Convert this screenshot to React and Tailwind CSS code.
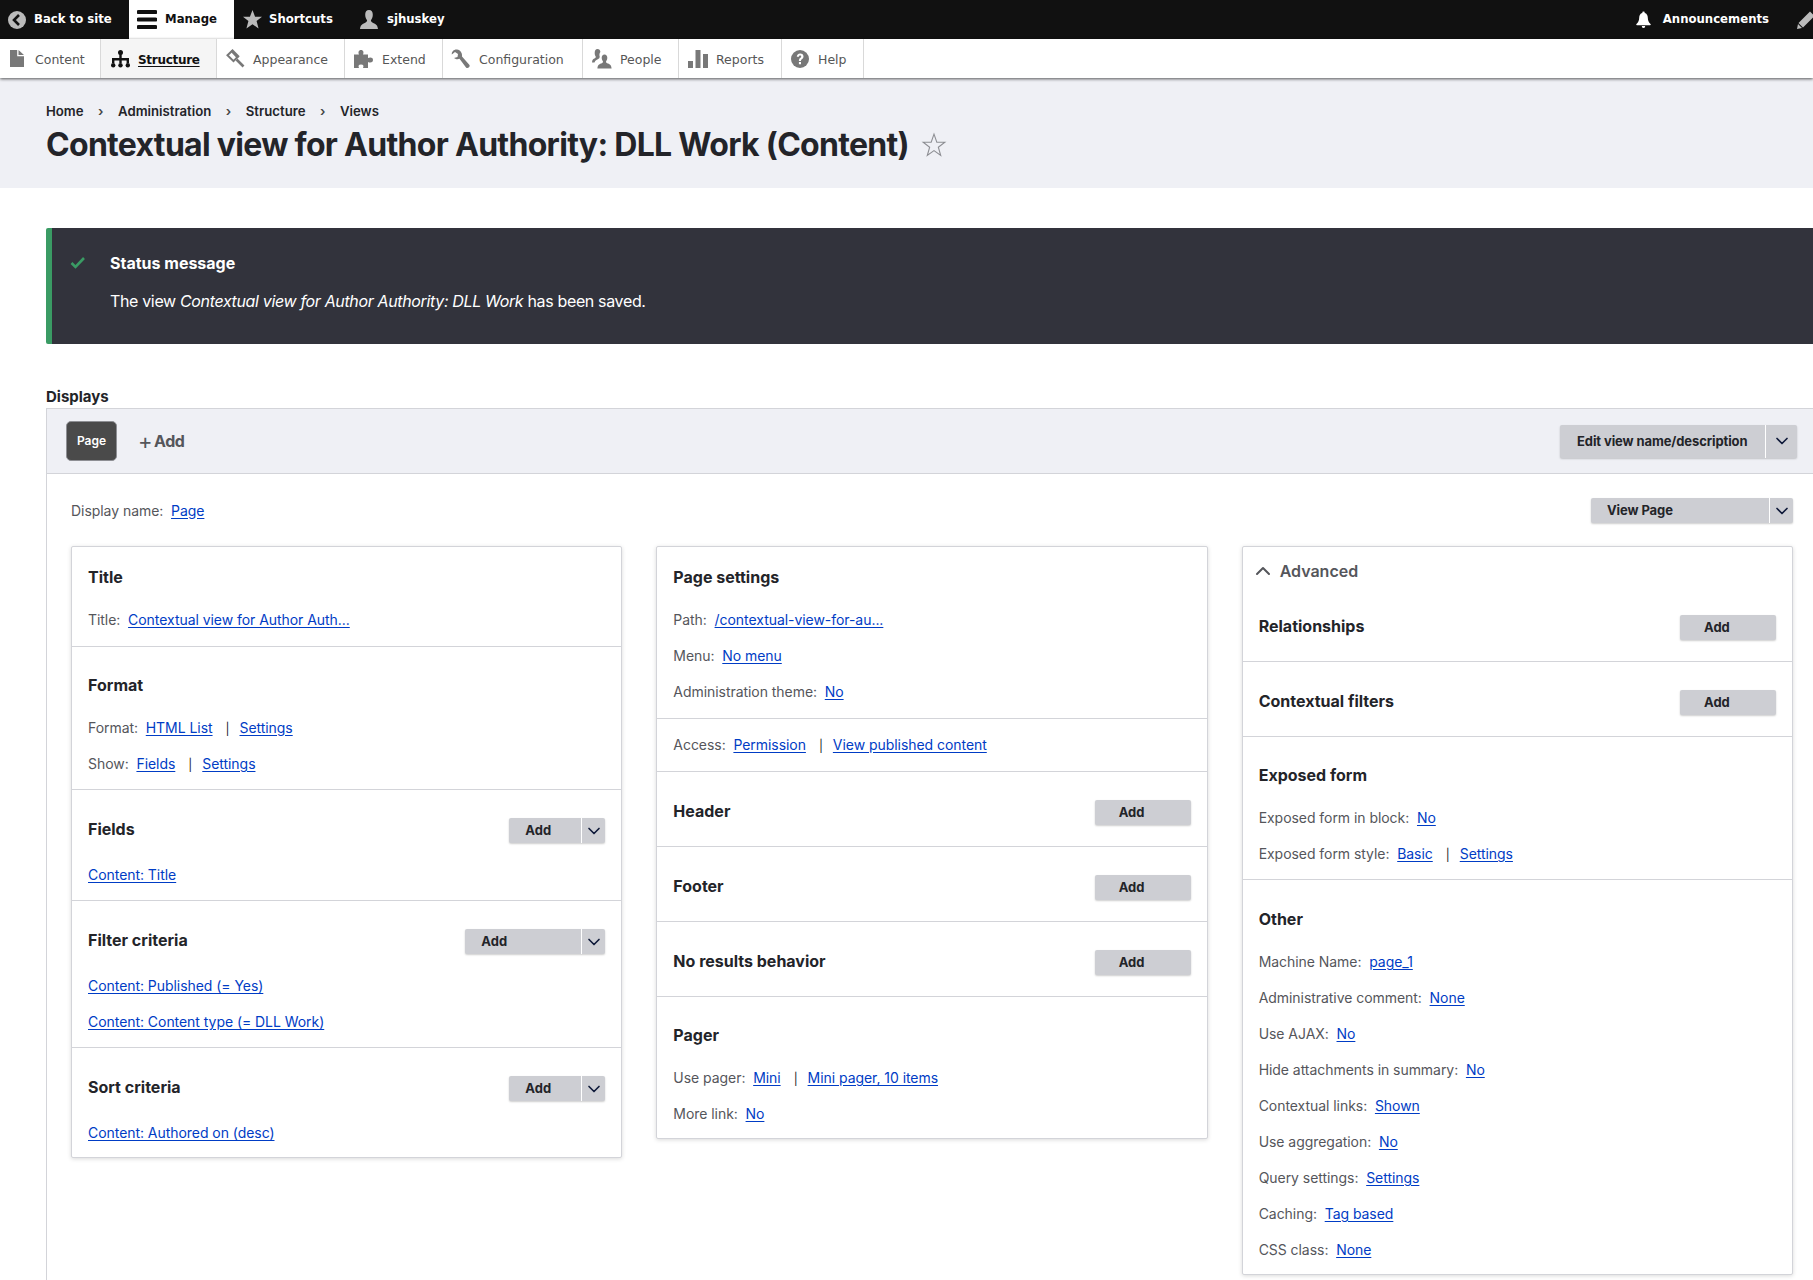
import React from 'react';
import { ChevronDown, ChevronUp } from 'lucide-react';

// toolbar icons, drawn after the Drupal admin toolbar set
const Icon = {
  back: (c) => <svg width="18" height="18" viewBox="0 0 18 18" className={c}><circle cx="9" cy="9" r="9" fill="#bbb" /><path d="M11 4 6 9l5 5" fill="none" stroke="#111" strokeWidth="2.600" /></svg>,
  menu: (c) => <svg width="20" height="20" viewBox="0 0 20 20" className={c}><path d="M1.500 0h17a1.500 1.500 0 0 1 0 4h-17a1.500 1.500 0 0 1 0-4zM1.500 7.500h17a1.500 1.500 0 0 1 0 4h-17a1.500 1.500 0 0 1 0-4zM1.500 15h17a1.500 1.500 0 0 1 0 4h-17a1.500 1.500 0 0 1 0-4z" fill="currentColor" /></svg>,
  star: (c) => <svg width="19" height="19" viewBox="0 0 20 20" className={c}><path d="m10 0 2.700 7H20l-5.700 4.600 2.100 7.900L10 15l-6.400 4.500 2.100-7.900L0 7h7.300z" fill="#bbb" /></svg>,
  user: (c) => <svg width="18" height="20" viewBox="0 0 18 20" className={c}><path d="M9 0c2.600 0 3.800 2 3.800 4.800 0 2.300-1 4.400-1.900 5.500 0 1.500 1.100 2.200 3.300 3.200 2 .9 3.300 1.700 3.800 5.500H0c.5-3.800 1.800-4.600 3.800-5.500C6 12.500 7.100 11.800 7.100 10.300 6.200 9.200 5.200 7.100 5.200 4.800 5.200 2 6.400 0 9 0z" fill="#bbb" /></svg>,
  bell: (c) => <svg width="15" height="18" viewBox="0 0 16 18" className={c}><path d="M8 0a1.300 1.300 0 0 1 1.300 1.500C11.500 2 12.500 4 12.600 6.500c.1 3 .9 5 2.900 6.800.5.500.2 1.200-.5 1.200H1c-.7 0-1-.7-.5-1.200 2-1.800 2.800-3.800 2.900-6.800C3.500 4 4.500 2 6.700 1.500A1.300 1.300 0 0 1 8 0zM6.200 15.500h3.600A1.800 1.800 0 0 1 8 17.500a1.800 1.800 0 0 1-1.800-2z" fill="currentColor" /></svg>,
  pencil: (c) => <svg width="18" height="18" viewBox="0 0 18 18" className={c}><path d="M13 .5 17.500 5 6 16.500 1.500 12zM1 13l4 4-5 1z" fill="currentColor" /></svg>,
  content: (c) => <svg width="14" height="17" viewBox="0 0 14 17" className={c}><path d="M0 0h7.200v6.200H14V17H0zM8.500 0 14 5H8.500z" fill="currentColor" /></svg>,
  structure: (c) => <svg width="19" height="18" viewBox="0 0 19 18" className={c}><circle cx="9.500" cy="2.500" r="2.500" fill="currentColor" /><path d="M8.300 4h2.400v4H18v5h-2.400v-2.600h-4.900V13H8.300v-2.600H3.400V13H1V8h7.300z" fill="currentColor" /><circle cx="2.200" cy="15.300" r="2.200" fill="currentColor" /><circle cx="9.500" cy="15.300" r="2.200" fill="currentColor" /><circle cx="16.800" cy="15.300" r="2.200" fill="currentColor" /></svg>,
  appearance: (c) => <svg width="19" height="19" viewBox="0 0 19 19" className={c}><path d="M1.500 6.200 6.500 1.500l5.800 5.800-4.800 4.800z" fill="none" stroke="currentColor" strokeWidth="2" /><path d="M6 1 13 8l-2 1.500L4.500 2.500z" fill="currentColor" /><path d="m10.500 10.500 7 7" stroke="currentColor" strokeWidth="2.600" /></svg>,
  extend: (c) => <svg width="20" height="18" viewBox="0 0 20 18" className={c}><path d="M0 4.500h5C4 2.500 4.500 0 7 0s3 2.500 2 4.500h5v3.600c2-1 5-.8 5 1.900s-3 2.900-5 1.900V18H9c1-2 .5-3.500-2-3.500S4 16 5 18H0z" fill="currentColor" /></svg>,
  config: (c) => <svg width="20" height="20" viewBox="0 0 20 20" className={c}><path d="M6 .5C3 .2.500 2.500.8 5.500L4 3l3 2-.5 3L3 9c2 1.500 4 1.500 5.500.8l6.500 8.700c1.500 1.500 4.500-.5 3.500-2.500L11 7.500c.5-3.500-1.500-6.500-5-7z" fill="currentColor" /></svg>,
  people: (c) => <svg width="20" height="20" viewBox="0 0 20 20" className={c}><path d="M12.500 5.500c1.800 0 2.800 1.300 2.800 3.300 0 1.700-.8 3-1.300 3.700 0 1 .6 1.500 2 2.100 2 .9 3.200 1.400 3.600 4.900H5.400c.4-3.500 1.600-4 3.600-4.900 1.400-.6 2-1.100 2-2.100-.5-.7-1.300-2-1.300-3.700 0-2 1-3.300 2.800-3.300z" fill="currentColor" /><path d="M5.500 0C7.200 0 8.300 1.200 8.400 3 7.300 4 7.200 6.500 7.800 8c-.4.500-.5.900-.5 1.300C5.500 10.800 3 11 2.500 13.500H0c.2-2.700 1-3.200 2.300-3.900C3.400 9 3.800 8.600 3.800 7.700 3.200 6.900 2.700 5.600 2.700 3.900 2.700 1.500 3.700 0 5.500 0z" fill="currentColor" /></svg>,
  reports: (c) => <svg width="20" height="18" viewBox="0 0 20 18" className={c}><path d="M0 11h5v7H0zM7.500 0h5v18h-5zM15 4h5v14h-5z" fill="currentColor" /></svg>,
  help: (c) => <svg width="18" height="18" viewBox="0 0 18 18" className={c}><circle cx="9" cy="9" r="9" fill="currentColor" /><path d="M5.800 6.800C5.800 4.900 7.200 3.600 9.200 3.600c2 0 3.300 1.200 3.300 2.900 0 2.500-2.500 2.400-2.500 4.500H7.900c0-3.200 2.300-3 2.300-4.500 0-.7-.4-1.100-1.100-1.100-.7 0-1.200.5-1.200 1.400zM7.900 12h2.100v2.200H7.900z" fill="#fff" /></svg>,
};

const tray = [
  ['content', 'Content', 'w-[101px]', 'pl-[7px]'],
  ['structure', 'Structure', 'w-[116px]', 'pl-[9px]'],
  ['appearance', 'Appearance', 'w-[128px]', 'pl-[8px]'],
  ['extend', 'Extend', 'w-[98px]', 'pl-[9px]'],
  ['config', 'Configuration', 'w-[140px]', 'pl-[8px]'],
  ['people', 'People', 'w-[96px]', 'pl-[9px]'],
  ['reports', 'Reports', 'w-[103px]', 'pl-[9px]'],
  ['help', 'Help', 'w-[82px]', 'pl-[8px]'],
];

const ToolbarLink = ({ icon, label, className = '' }) => (
  <a className={`flex items-center h-[39px] text-[11.700px] font-bold ${className}`}>
    {Icon[icon]('shrink-0')}
    {label}
  </a>
);

const Link = ({ children }) => <a className="text-[#003cc5] underline underline-offset-2">{children}</a>;

const Bar = () => <span className="ml-[13px] mr-[10px] text-xs text-[#232429]">|</span>;

// a row of "Label: link | link"
const Line = ({ label, links, className = 'mt-[15px]' }) => (
  <div className={`text-sm leading-[21px] tracking-[-0.05px] text-[#55565b] ${className}`}>
    {label && <span>{label}:&nbsp; </span>}
    {links.map((l, i) => (
      <React.Fragment key={l}>
        {i > 0 && <Bar />}
        <Link>{l}</Link>
      </React.Fragment>
    ))}
  </div>
);

const AddButton = ({ width, drop }) => (
  <div className={`flex h-[25px] ${width} rounded-[2px] bg-[#cdced3] shadow-[0_1px_2px_rgba(0,0,0,0.2)] text-[13px] font-bold text-[#232429]`}>
    <span className={`flex-1 leading-[25px] ${drop ? 'pl-[16px]' : 'pl-6'}`}>Add</span>
    {drop && (
      <span className="flex w-[24px] items-center justify-center border-l border-white">
        <ChevronDown size={20} strokeWidth={2} className="text-[#0f1a3a]" />
      </span>
    )}
  </div>
);

const Section = ({ title, button, children, first, last, className = '' }) => (
  <section className={`px-4 ${first ? 'pt-5 pb-4' : 'pt-7'} ${children ? (last ? 'pb-[14px]' : first ? '' : 'pb-[15px]') : 'pb-[21px]'} ${last ? '' : 'border-b border-[#d3d4d9]'} ${className}`}>
    <div className="flex items-start justify-between">
      <h3 className={`text-base font-bold leading-5 text-[#232429] ${button ? 'mt-[1px]' : ''}`}>{title}</h3>
      {button}
    </div>
    {children}
  </section>
);

const Panel = ({ className = '', children }) => (
  <div className={`flex-1 rounded-[2px] border border-[#d3d4d9] bg-white shadow-[0_1px_4px_rgba(0,0,0,0.15)] ${className}`}>{children}</div>
);

export default function App() {
  return (
    <div className="h-[1280px] overflow-hidden bg-white font-['Inter','Liberation_Sans',sans-serif] text-[#232429]">
      <div className="flex h-[39px] justify-between bg-[#111111] text-white font-['DejaVu_Sans','Liberation_Sans',sans-serif]">
        <div className="flex">
          <ToolbarLink icon="back" label="Back to site" className="w-[129px] gap-2 pl-2" />
          <ToolbarLink icon="menu" label="Manage" className="w-[105px] gap-2 bg-white pl-2 text-[#111]" />
          <ToolbarLink icon="star" label="Shortcuts" className="w-[117px] gap-[7px] pl-[9px]" />
          <ToolbarLink icon="user" label="sjhuskey" className="gap-[9px] pl-[9px]" />
        </div>
        <div className="flex items-center">
          <ToolbarLink icon="bell" label="Announcements" className="gap-3" />
          {Icon.pencil('ml-[28px] mr-[-2px] text-[#bbb]')}
        </div>
      </div>

      <nav className="relative z-10 flex h-[39px] bg-white font-['DejaVu_Sans','Liberation_Sans',sans-serif] text-[12.500px] text-[#565656] shadow-[0_1px_3px_rgba(0,0,0,0.65)]">
        {tray.map(([icon, label, w, pad]) => {
          const active = label === 'Structure';
          return (
            <a
              key={label}
              className={`flex items-center gap-2 border-r border-[#d9d9d9] ${w} ${pad} ${active ? 'bg-[#f5f5f5] text-xs font-bold tracking-[-0.3px] text-[#111]' : ''}`}
            >
              <span className={`flex w-5 shrink-0 justify-center ${active ? 'text-[#111]' : 'text-[#787878]'}`}>{Icon[icon]('shrink-0')}</span>
              <span className={`pt-[3px] ${active ? 'underline underline-offset-2' : ''}`}>{label}</span>
            </a>
          );
        })}
      </nav>

      <header className="h-[110px] bg-[#eff0f5] px-[46px] pt-[23px]">
        <div className="flex items-center text-[13.200px] font-semibold leading-5">
          <span>Home</span>
          <span className="mx-[14.500px] text-[#444]">›</span>
          <span>Administration</span>
          <span className="mx-[14.500px] text-[#444]">›</span>
          <span>Structure</span>
          <span className="mx-[14.500px] text-[#444]">›</span>
          <span>Views</span>
        </div>
        <div className="mt-1 flex items-center gap-3">
          <h1 className="text-[32px] font-bold leading-10 tracking-[-0.7px]">Contextual view for Author Authority: DLL Work (Content)</h1>
          <svg width="26" height="26" viewBox="0 0 24 24" className="text-[#8d8e93]"><path d="m12 2 2.600 7.400H22l-6 4.700 2.200 7.600L12 17.200l-6.200 4.500L8 14.100 2 9.400h7.400z" fill="none" stroke="currentColor" strokeWidth="1" /></svg>
        </div>
      </header>

      <div className="pl-[46px]">
        <div className="relative mt-10 h-[116px] rounded-l-[2px] border-l-[6px] border-[#3a9b64] bg-[#32333c] pl-[58px] pr-8 pt-[25px] text-white">
          <svg width="16" height="14" viewBox="0 0 16 14" className="absolute left-[18px] top-7"><path d="m1.500 7 4 4L14 2" fill="none" stroke="#3a9b64" strokeWidth="2.600" /></svg>
          <p className="text-base font-bold leading-5">Status message</p>
          <p className="mt-[18px] text-base leading-5 tracking-[-0.35px]">
            The view <em>Contextual view for Author Authority: DLL Work</em> has been saved.
          </p>
        </div>

        <h2 className="mt-[43px] text-[15px] font-bold leading-5">Displays</h2>

        <div className="mt-[1px] border-t border-l border-[#d3d4d9] pb-10">
          <div className="flex h-[65px] items-center justify-between border-b border-[#d3d4d9] bg-[#eff0f5] pl-[19px] pr-4">
            <div className="flex items-center">
              <span className="flex h-10 w-[51px] items-center justify-center rounded-[5px] border border-[#8e8f94] bg-[#4a4a4a] text-xs font-semibold text-white">Page</span>
              <span className="ml-[21px] flex items-center gap-[2px] text-base font-bold tracking-[-0.5px] text-[#55565b]"><span className="text-[22px] font-normal leading-5">+</span>Add</span>
            </div>
            <div className="flex h-[33px] w-[237px] rounded-[2px] bg-[#cdced3] text-[13px] font-bold tracking-[-0.1px] shadow-[0_1px_2px_rgba(0,0,0,0.2)]">
              <span className="flex-1 pl-[17px] leading-[33px]">Edit view name/description</span>
              <span className="flex w-8 items-center justify-center border-l border-white">
                <ChevronDown size={20} strokeWidth={2} className="text-[#0f1a3a]" />
              </span>
            </div>
          </div>

          <div className="pl-6 pr-5 pt-6">
            <div className="flex h-[25px] items-center justify-between">
              <div className="text-sm tracking-[-0.05px] text-[#55565b]">Display name:&nbsp; <Link>Page</Link></div>
              <div className="flex h-[25px] w-[202px] rounded-[2px] bg-[#cdced3] text-[13px] font-bold tracking-[-0.1px] shadow-[0_1px_2px_rgba(0,0,0,0.2)]">
                <span className="flex-1 pl-4 leading-[25px]">View Page</span>
                <span className="flex w-6 items-center justify-center border-l border-white">
                  <ChevronDown size={20} strokeWidth={2} className="text-[#0f1a3a]" />
                </span>
              </div>
            </div>

            <div className="mt-[23px] flex items-start gap-[34px]">
              <Panel>
                <Section title="Title" first>
                  <Line label="Title" links={['Contextual view for Author Auth...']} className="mt-[22px]" />
                </Section>
                <Section title="Format">
                  <Line label="Format" links={['HTML List', 'Settings']} className="mt-[22px]" />
                  <Line label="Show" links={['Fields', 'Settings']} />
                </Section>
                <Section title="Fields" button={<AddButton width="w-[96px]" drop />}>
                  <Line links={['Content: Title']} className="mt-[21px]" />
                </Section>
                <Section title="Filter criteria" button={<AddButton width="w-[140px]" drop />}>
                  <Line links={['Content: Published (= Yes)']} className="mt-[21px]" />
                  <Line links={['Content: Content type (= DLL Work)']} />
                </Section>
                <Section title="Sort criteria" button={<AddButton width="w-[96px]" drop />} last>
                  <Line links={['Content: Authored on (desc)']} className="mt-[21px]" />
                </Section>
              </Panel>

              <Panel>
                <Section title="Page settings" first>
                  <Line label="Path" links={['/contextual-view-for-au...']} className="mt-[22px]" />
                  <Line label="Menu" links={['No menu']} />
                  <Line label="Administration theme" links={['No']} />
                </Section>
                <section className="border-b border-[#d3d4d9] px-4 pb-4 pt-[15px]">
                  <Line label="Access" links={['Permission', 'View published content']} className="" />
                </section>
                <Section title="Header" button={<AddButton width="w-[96px]" />} />
                <Section title="Footer" button={<AddButton width="w-[96px]" />} />
                <Section title="No results behavior" button={<AddButton width="w-[96px]" />} />
                <Section title="Pager" last>
                  <Line label="Use pager" links={['Mini', 'Mini pager, 10 items']} className="mt-[22px]" />
                  <Line label="More link" links={['No']} />
                </Section>
              </Panel>

              <Panel>
                <div className="flex h-10 items-start gap-[5px] pl-2 pt-[14px] text-base font-semibold leading-5 text-[#55565b]">
                  <ChevronUp size={24} strokeWidth={2} className="-mt-[2px]" />
                  Advanced
                </div>
                <Section title="Relationships" button={<AddButton width="w-[96px]" />} />
                <Section title="Contextual filters" button={<AddButton width="w-[96px]" />} />
                <Section title="Exposed form">
                  <Line label="Exposed form in block" links={['No']} className="mt-[22px]" />
                  <Line label="Exposed form style" links={['Basic', 'Settings']} />
                </Section>
                <Section title="Other" last className="!pt-[29px]">
                  <Line label="Machine Name" links={['page_1']} className="mt-[22px]" />
                  <Line label="Administrative comment" links={['None']} />
                  <Line label="Use AJAX" links={['No']} />
                  <Line label="Hide attachments in summary" links={['No']} />
                  <Line label="Contextual links" links={['Shown']} />
                  <Line label="Use aggregation" links={['No']} />
                  <Line label="Query settings" links={['Settings']} />
                  <Line label="Caching" links={['Tag based']} />
                  <Line label="CSS class" links={['None']} />
                </Section>
              </Panel>
            </div>
          </div>
        </div>
      </div>
    </div>
  );
}
